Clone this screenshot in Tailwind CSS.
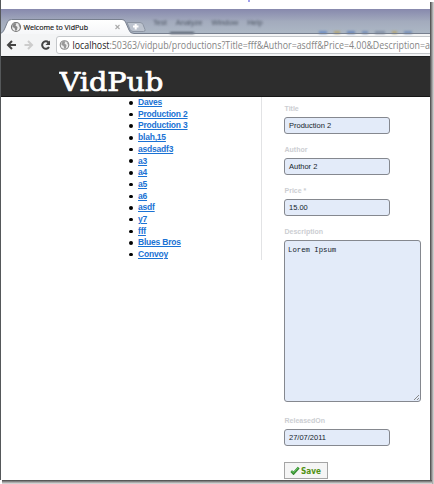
<!DOCTYPE html>
<html lang="en">
<head>
<meta charset="utf-8">
<title>Welcome to VidPub</title>
<script src="https://cdn.jsdelivr.net/npm/@tailwindcss/browser@4"></script>
</head>
<body class="w-[434px] h-[484px] overflow-hidden bg-white relative font-['Liberation_Sans',sans-serif]">
<div class="w-[430px] h-[480px] border-l border-[#55585a] bg-white overflow-hidden flex flex-col">
  <div class="h-[9px] shrink-0"></div>
  <!-- tab strip -->
  <div class="h-[25px] shrink-0 relative bg-gradient-to-b from-[#8789ad] via-[#a3abbd] to-[#adb8c5]">
    <div class="absolute left-[152px] top-[8px] flex gap-[9px] text-[7.5px] leading-[12px] text-[#4c5563] blur-[1px]"><span>Test</span><span>Analyze</span><span>Window</span><span>Help</span></div>
    <div class="absolute left-[169px] top-[23px] w-[24px] h-[2px] bg-[#4f5867] blur-[1px]"></div>
    <div class="absolute left-[308px] right-0 top-[22px] h-[3px] flex gap-[7px] pl-[10px] blur-[1px]"><i class="w-[8px] bg-[#6f8fc4]"></i><i class="w-[6px] bg-[#b4a678]"></i><i class="w-[8px] bg-[#6d89bb]"></i><i class="w-[6px] bg-[#7890b8]"></i><i class="w-[10px] bg-[#8592a8]"></i><i class="w-[5px] bg-[#b4a678]"></i><i class="w-[8px] bg-[#7890b8]"></i></div>
    <svg class="absolute left-0 top-0" width="429" height="25" viewBox="1 9 429 25">
      <defs><linearGradient id="tab" x1="0" y1="0" x2="0" y2="1"><stop offset="0" stop-color="#fff"/><stop offset="1" stop-color="#f5f6f8"/></linearGradient></defs>
      <path d="M127 22.500H140Q142 22.500 143 24.500L145 29.500Q145.500 31.500 143.500 31.500H133Q131 31.500 130 29.500Z" fill="#bcc3ce" stroke="#8d95a3"/>
      <path d="M133 26.500h5.500M135.700 24v5.500" stroke="#fff" stroke-width="2"/>
      <path d="M0 34Q4 32 5 28L7.500 22Q8.500 19.500 11.500 19.500H122Q124.500 19.500 125.500 22L129 30Q130 33.500 134 33.500H430V35H0Z" fill="url(#tab)" stroke="#777f8e"/>
      <circle cx="16" cy="27" r="4.500" fill="#eee" stroke="#777" stroke-width="1.200"/>
      <path d="M12.500 25l2-2 2 .5-1 2 2 1.500-.5 3-1.500 1-1-3-2-1zM18 24l2 1.500v2z" fill="#888"/>
      <text x="23.500" y="30" font-family="Open Sans, sans-serif" font-size="8" fill="#111" stroke="#111" stroke-width=".15" textLength="64.500" lengthAdjust="spacingAndGlyphs">Welcome to VidPub</text>
      <path d="M115.500 25l4 4m0-4l-4 4" stroke="#aaa" stroke-width="1.100"/>
    </svg>
  </div>
  <!-- address bar -->
  <svg class="shrink-0 block" width="429" height="22" viewBox="1 34 429 22">
    <rect x="0" y="34" width="430" height="22" fill="#f3f4f5"/>
    <rect x="56.500" y="36.500" width="390" height="17" rx="2.500" fill="#fff" stroke="#c4c7ca"/>
    <path d="M16 45H8.500M12 41l-4 4 4 4" fill="none" stroke="#444" stroke-width="2"/>
    <path d="M24.500 45h7M28 41l4 4-4 4" fill="none" stroke="#ccc" stroke-width="2"/>
    <path d="M48.500 42.500A3.700 3.700 0 1 0 49 47" fill="none" stroke="#444" stroke-width="2"/><path d="M50 40.500v4.500h-4.500z" fill="#444"/>
    <circle cx="64.500" cy="45" r="4.300" fill="#eee" stroke="#888" stroke-width="1.100"/>
    <path d="M61.500 43l2-2 2 .5-1 2 2 1.500-.5 3-1.500 1-1-3-2-1zM66.500 42l2 1.500v2z" fill="#999"/>
    <text y="49" x="72.500" font-family="Open Sans, sans-serif" font-size="10.500" fill="#858585" textLength="357.500" lengthAdjust="spacingAndGlyphs"><tspan fill="#222">localhost</tspan>:50363/vidpub/productions?Title=fff&amp;Author=asdff&amp;Price=4.00&amp;Description=a</text>
  </svg>
  <header class="h-[41px] shrink-0 bg-[#2d2d2d] border-y border-t-[#1d1f1f] border-b-[#161616] pl-[58px]">
    <svg width="108" height="39" viewBox="59 57 108 39"><text x="59.500" y="91" font-family="DejaVu Serif, serif" font-size="25.500" fill="#fff" stroke="#fff" stroke-width=".7" textLength="104" lengthAdjust="spacingAndGlyphs">VidPub</text></svg>
  </header>
  <main class="flex-1 flex items-start">
    <div class="w-[261px] h-[163px] border-r border-[#e2e3e5] pl-[128px] flex gap-[5px]">
      <!-- bullets sit in their own column so their offset stays fixed -->
      <div class="w-[4px] pt-[4px] flex flex-col gap-[8.2px]">
        <i class="size-[3.5px] rounded-full bg-black shrink-0"></i><i class="size-[3.5px] rounded-full bg-black shrink-0"></i><i class="size-[3.5px] rounded-full bg-black shrink-0"></i><i class="size-[3.5px] rounded-full bg-black shrink-0"></i><i class="size-[3.5px] rounded-full bg-black shrink-0"></i><i class="size-[3.5px] rounded-full bg-black shrink-0"></i><i class="size-[3.5px] rounded-full bg-black shrink-0"></i><i class="size-[3.5px] rounded-full bg-black shrink-0"></i><i class="size-[3.5px] rounded-full bg-black shrink-0"></i><i class="size-[3.5px] rounded-full bg-black shrink-0"></i><i class="size-[3.5px] rounded-full bg-black shrink-0"></i><i class="size-[3.5px] rounded-full bg-black shrink-0"></i><i class="size-[3.5px] rounded-full bg-black shrink-0"></i><i class="size-[3.5px] rounded-full bg-black shrink-0"></i>
      </div>
      <ul class="text-[8.5px] tracking-[-0.2px] leading-[11.7px] font-bold text-[#1a72d4]">
        <li><a class="underline">Daves</a></li>
        <li><a class="underline">Production 2</a></li>
        <li><a class="underline">Production 3</a></li>
        <li><a class="underline">blah,15</a></li>
        <li><a class="underline">asdsadf3</a></li>
        <li><a class="underline">a3</a></li>
        <li><a class="underline">a4</a></li>
        <li><a class="underline">a5</a></li>
        <li><a class="underline">a6</a></li>
        <li><a class="underline">asdf</a></li>
        <li><a class="underline">y7</a></li>
        <li><a class="underline">fff</a></li>
        <li><a class="underline">Blues Bros</a></li>
        <li><a class="underline">Convoy</a></li>
      </ul>
    </div>
    <form class="ml-[22px] pt-[7.4px] flex flex-col text-[7.5px] text-[#151d2b]">
      <label class="h-[13px] leading-[10px] text-[7px] font-bold text-[#ccced2] pl-[0.5px]">Title</label>
      <div class="w-[106px] h-[17px] mb-[11px] border border-[#85888f] rounded-[3px] bg-[#e3ebf9] pl-[4px] leading-[16px]">Production 2</div>
      <label class="h-[13px] leading-[10px] text-[7px] font-bold text-[#ccced2] pl-[0.5px]">Author</label>
      <div class="w-[106px] h-[17px] mb-[11px] border border-[#85888f] rounded-[3px] bg-[#e3ebf9] pl-[4px] leading-[16px]">Author 2</div>
      <label class="h-[13px] leading-[10px] text-[7px] font-bold text-[#ccced2] pl-[0.5px]">Price *</label>
      <div class="w-[106px] h-[17px] mb-[11px] border border-[#85888f] rounded-[3px] bg-[#e3ebf9] pl-[4px] leading-[16px]">15.00</div>
      <label class="h-[13px] leading-[10px] text-[7px] font-bold text-[#ccced2] pl-[0.5px]">Description</label>
      <div class="w-[137px] h-[162px] mb-[13.3px] border border-[#85888f] rounded-[3px] bg-[#e3ebf9] pl-[3px] pt-[4px] leading-[10px] font-['Liberation_Mono',monospace] text-[7.3px] relative">Lorem Ipsum<svg class="absolute right-[1px] bottom-[1px]" width="5" height="5"><path d="M0 5L5 0M3 5L5 3" stroke="#888"/></svg></div>
      <label class="h-[13px] leading-[10px] text-[7px] font-bold text-[#ccced2] pl-[0.5px]">ReleasedOn</label>
      <div class="w-[106px] h-[17px] mb-[16px] border border-[#85888f] rounded-[3px] bg-[#e3ebf9] pl-[4px] leading-[16px]">27/07/2011</div>
      <div class="w-[44px] h-[17px] border border-[#a5a5a5] bg-[#f5f5f5] flex items-center pl-[5px] gap-[1px] text-[#529214]">
        <svg class="shrink-0" width="10" height="9"><path d="M1.300 5.200l2.200 2.200L8.700 1.700" fill="none" stroke="#388e32" stroke-width="2.600"/><path d="M1.500 4.800l2 1.900L8.300 1.500" fill="none" stroke="#65c861" stroke-width="1"/></svg>
        <svg class="shrink-0" width="22" height="11"><text x="0" y="8.500" font-family="DejaVu Sans, sans-serif" font-weight="bold" font-size="8.300" fill="#529214" textLength="20" lengthAdjust="spacingAndGlyphs">Save</text></svg>
      </div>
    </form>
  </main>
</div>
<div class="absolute left-[248px] top-0 w-[2px] h-[2px] bg-[#a2a2ee]"></div>
<!-- window drop shadow -->
<div class="absolute left-[430px] top-[2px] w-[4px] h-[482px] bg-gradient-to-r from-[#444] via-[#999] to-[#ddd]"></div>
<div class="absolute left-[2px] top-[480px] w-[430px] h-[4px] bg-gradient-to-b from-[#444] via-[#999] to-[#e5e5e5]"></div>
</body>
</html>
